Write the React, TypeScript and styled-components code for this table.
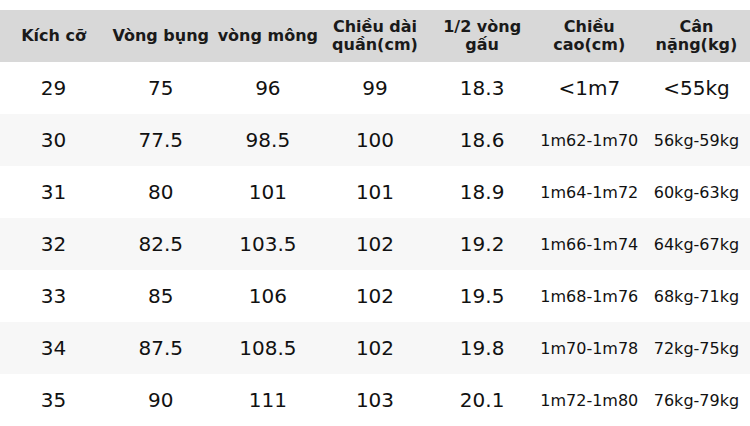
import React from "react";
import styled, { createGlobalStyle } from "styled-components";

const Global = createGlobalStyle`
  html, body { margin: 0; padding: 0; background: #ffffff; }
  body { font-family: "DejaVu Sans", "Noto Sans", sans-serif; }
`;

const Page = styled.div`
  width: 750px;
  height: 426px;
  padding-top: 10px;
  box-sizing: border-box;
  background: #ffffff;
  overflow: hidden;
`;

const Row = styled.div<{ $bg: string }>`
  display: grid;
  grid-template-columns: repeat(7, 1fr);
  height: 52px;
  background: ${(p) => p.$bg};
`;

const HeadCell = styled.div`
  display: flex;
  align-items: center;
  justify-content: center;
  text-align: center;
  font-weight: bold;
  font-size: 16px;
  line-height: 18px;
  color: #1a1a1a;
  padding: 0 1px;
`;

const Cell = styled.div<{ $small?: boolean }>`
  display: flex;
  align-items: center;
  justify-content: center;
  text-align: center;
  font-size: ${(p) => (p.$small ? "16px" : "20px")};
  color: #111111;
  white-space: nowrap;
`;

const headers = [
  "Kích cỡ",
  "Vòng bụng",
  "vòng mông",
  "Chiều dài quần(cm)",
  "1/2 vòng gấu",
  "Chiều cao(cm)",
  "Cân nặng(kg)",
];

const rows: string[][] = [
  ["29", "75", "96", "99", "18.3", "<1m7", "<55kg"],
  ["30", "77.5", "98.5", "100", "18.6", "1m62-1m70", "56kg-59kg"],
  ["31", "80", "101", "101", "18.9", "1m64-1m72", "60kg-63kg"],
  ["32", "82.5", "103.5", "102", "19.2", "1m66-1m74", "64kg-67kg"],
  ["33", "85", "106", "102", "19.5", "1m68-1m76", "68kg-71kg"],
  ["34", "87.5", "108.5", "102", "19.8", "1m70-1m78", "72kg-75kg"],
  ["35", "90", "111", "103", "20.1", "1m72-1m80", "76kg-79kg"],
];

export default function App() {
  return (
    <>
      <Global />
      <Page>
        <Row $bg="#d8d8d8">
          {headers.map((h) => (
            <HeadCell key={h}>{h}</HeadCell>
          ))}
        </Row>
        {rows.map((r, i) => (
          <Row key={r[0]} $bg={i % 2 === 0 ? "#ffffff" : "#f7f7f7"}>
            {r.map((c, j) => (
              <Cell key={j} $small={c.length > 6}>
                {c}
              </Cell>
            ))}
          </Row>
        ))}
      </Page>
    </>
  );
}
